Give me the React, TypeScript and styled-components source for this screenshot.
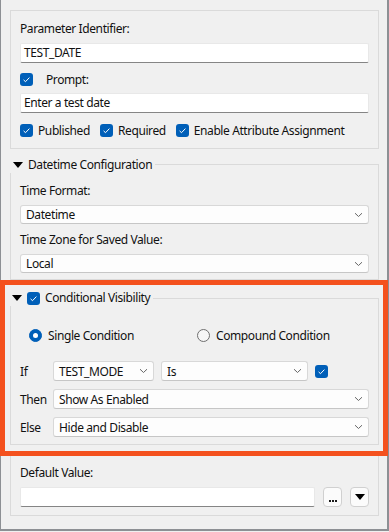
import styled, { createGlobalStyle } from 'styled-components';

const GlobalStyle = createGlobalStyle`
  body {
    margin: 0;
    background: #f0f0f0;
    font-family: "Noto Sans", "Liberation Sans", sans-serif;
    font-size: 12px;
    letter-spacing: -0.4px;
    color: #111;
  }
`;

const Page = styled.div`
  position: relative;
  width: 389px;
  height: 532px;
  overflow: hidden;
`;

const Window = styled.div`
  box-sizing: border-box;
  width: 389px;
  height: 531px;
  background: #f0f0f0;
  border-left: 1px solid #8d9094;
  border-right: 2px solid #8d9094;
  border-bottom: 2px solid #8d9094;
  padding: 10px 8px 0 9px;
  display: flex;
  flex-direction: column;
`;

// orange annotation frame drawn over the dialog
const Highlight = styled.div`
  position: absolute;
  left: 0;
  top: 280px;
  width: 388px;
  height: 176px;
  box-sizing: border-box;
  border: 5px solid #f4511e;
  pointer-events: none;
`;

const Panel = styled.div<{ $top?: number; $pt?: number; $pb?: number }>`
  margin-top: ${(p) => p.$top ?? 0}px;
  border: 1px solid #dadada;
  padding: ${(p) => p.$pt ?? 10}px 9px ${(p) => p.$pb ?? 8}px;
  display: flex;
  flex-direction: column;
`;

const Label = styled.div<{ $top?: number }>`
  margin-top: ${(p) => p.$top ?? 0}px;
  height: 16px;
  line-height: 16px;
  white-space: nowrap;
`;

const TextInput = styled.div<{ $top?: number; $width?: number }>`
  margin-top: ${(p) => p.$top ?? 0}px;
  box-sizing: border-box;
  height: 20px;
  ${(p) => (p.$width ? `width: ${p.$width}px;` : '')}
  background: #fff;
  border: 1px solid #e8e8e8;
  border-bottom-color: #858585;
  border-radius: 2px;
  padding: 0 3px;
  line-height: 18px;
  white-space: nowrap;
`;

const Row = styled.div<{ $top?: number; $gap?: number; $pl?: number }>`
  margin-top: ${(p) => p.$top ?? 0}px;
  padding-left: ${(p) => p.$pl ?? 0}px;
  height: 20px;
  display: flex;
  align-items: center;
  gap: ${(p) => p.$gap ?? 0}px;
  white-space: nowrap;
`;

const CheckItem = styled.div<{ $gap?: number }>`
  display: flex;
  align-items: center;
  gap: ${(p) => p.$gap ?? 5}px;
`;

const Box = styled.span`
  flex: none;
  width: 13px;
  height: 13px;
  border-radius: 3px;
  background: #005fb8;
  display: inline-flex;
  align-items: center;
  justify-content: center;
`;

const Radio = styled.span<{ $on?: boolean }>`
  flex: none;
  box-sizing: border-box;
  width: 13px;
  height: 13px;
  border-radius: 50%;
  background: ${(p) => (p.$on ? '#005fb8' : '#f6f6f6')};
  border: 1px solid ${(p) => (p.$on ? '#005fb8' : '#6f6f6f')};
  display: inline-flex;
  align-items: center;
  justify-content: center;
  &::after {
    content: '';
    display: ${(p) => (p.$on ? 'block' : 'none')};
    width: 5px;
    height: 5px;
    border-radius: 50%;
    background: #fff;
  }
`;

const Combo = styled.div<{ $top?: number; $width?: number }>`
  margin-top: ${(p) => p.$top ?? 0}px;
  box-sizing: border-box;
  height: 20px;
  ${(p) => (p.$width ? `width: ${p.$width}px; flex: none;` : 'flex: 1;')}
  background: #fdfdfd;
  border: 1px solid #d8d8d8;
  border-bottom-color: #c6c6c6;
  border-radius: 3px;
  padding: 0 5px;
  display: flex;
  align-items: center;
  justify-content: space-between;
  white-space: nowrap;
`;

const GroupHeader = styled.div<{ $top?: number }>`
  margin-top: ${(p) => p.$top ?? 0}px;
  height: 16px;
  display: flex;
  align-items: center;
  line-height: 16px;
  white-space: nowrap;
`;

const Caret = styled.span<{ $ml?: number }>`
  flex: none;
  margin-left: ${(p) => p.$ml ?? 3}px;
  width: 0;
  height: 0;
  border-left: 5px solid transparent;
  border-right: 5px solid transparent;
  border-top: 6px solid #000;
`;

const HeaderText = styled.span<{ $ml?: number }>`
  margin-left: ${(p) => p.$ml ?? 5}px;
`;

const HeaderLine = styled.span<{ $lineTop?: number }>`
  flex: 1;
  align-self: stretch;
  margin-left: 3px;
  margin-top: ${(p) => p.$lineTop ?? 7}px;
  border-top: 1px solid #dadada;
  border-right: 1px solid #dadada;
`;

const GroupBody = styled.div<{ $pt?: number; $pb?: number }>`
  border: 1px solid #dadada;
  border-top: none;
  padding: ${(p) => p.$pt ?? 10}px 9px ${(p) => p.$pb ?? 6}px;
  display: flex;
  flex-direction: column;
`;

const RowLabel = styled.span`
  flex: none;
  width: 33px;
`;

const RadioItem = styled.div<{ $width?: number }>`
  flex: none;
  width: ${(p) => (p.$width ? `${p.$width}px` : 'auto')};
  display: flex;
  align-items: center;
  gap: 6px;
`;

const SmallButton = styled.div`
  flex: none;
  box-sizing: border-box;
  width: 19px;
  height: 20px;
  background: #fbfbfb;
  border: 1px solid #d0d0d0;
  border-radius: 4px;
  display: flex;
  align-items: center;
  justify-content: center;
`;

const Dots = styled.span`
  display: flex;
  gap: 1px;
  margin-top: 8px;
  & > i {
    width: 2px;
    height: 2px;
    background: #1a1a1a;
  }
`;

function Check() {
  return (
    <Box>
      <svg width="13" height="13" viewBox="0 0 13 13">
        <path d="M3.6 6.9 L5.5 8.7 L9.4 4.6" fill="none" stroke="#fff" strokeWidth="1" />
      </svg>
    </Box>
  );
}

function Chevron() {
  return (
    <svg width="9" height="6" viewBox="0 0 9 6">
      <path d="M1 1.2 L4.5 4.5 L8 1.2" fill="none" stroke="#666" strokeWidth="1" />
    </svg>
  );
}

function Select({ value, top, width }: { value: string; top?: number; width?: number }) {
  return (
    <Combo $top={top} $width={width}>
      <span>{value}</span>
      <Chevron />
    </Combo>
  );
}

export default function App() {
  return (
    <>
      <GlobalStyle />
      <Page>
        <Window>
          <Panel $pt={10} $pb={8}>
            <Label>Parameter Identifier:</Label>
            <TextInput $top={6}>TEST_DATE</TextInput>
            <Row $top={6}>
              <CheckItem $gap={13}>
                <Check />
                <span>Prompt:</span>
              </CheckItem>
            </Row>
            <TextInput $top={4}>Enter a test date</TextInput>
            <Row $top={7} $gap={10}>
              <CheckItem>
                <Check />
                <span>Published</span>
              </CheckItem>
              <CheckItem>
                <Check />
                <span>Required</span>
              </CheckItem>
              <CheckItem>
                <Check />
                <span>Enable Attribute Assignment</span>
              </CheckItem>
            </Row>
          </Panel>

          <GroupHeader $top={8}>
            <Caret />
            <HeaderText>Datetime Configuration</HeaderText>
            <HeaderLine $lineTop={7} />
          </GroupHeader>
          <GroupBody $pt={10} $pb={6}>
            <Label>Time Format:</Label>
            <Select top={6} value="Datetime" />
            <Label $top={8}>Time Zone for Saved Value:</Label>
            <Select top={6} value="Local" />
          </GroupBody>

          <GroupHeader $top={10}>
            <Caret $ml={2} />
            <CheckItem $gap={5} style={{ marginLeft: 5 }}>
              <Check />
              <span>Conditional Visibility</span>
            </CheckItem>
            <HeaderLine $lineTop={8} />
          </GroupHeader>
          <GroupBody $pt={21} $pb={7}>
            <Row $pl={9} style={{ height: 16 }}>
              <RadioItem $width={168}>
                <Radio $on />
                <span>Single Condition</span>
              </RadioItem>
              <RadioItem>
                <Radio />
                <span>Compound Condition</span>
              </RadioItem>
            </Row>
            <Row $top={18}>
              <RowLabel>If</RowLabel>
              <Select width={101} value="TEST_MODE" />
              <span style={{ width: 7 }} />
              <Select width={147} value="Is" />
              <span style={{ marginLeft: 7, display: 'flex' }}>
                <Check />
              </span>
            </Row>
            <Row $top={8}>
              <RowLabel>Then</RowLabel>
              <Select value="Show As Enabled" />
            </Row>
            <Row $top={8}>
              <RowLabel>Else</RowLabel>
              <Select value="Hide and Disable" />
            </Row>
          </GroupBody>

          <Panel $top={9} $pt={10} $pb={8}>
            <Label>Default Value:</Label>
            <Row $top={6} $gap={8}>
              <TextInput $width={297} />
              <SmallButton>
                <Dots>
                  <i />
                  <i />
                  <i />
                </Dots>
              </SmallButton>
              <SmallButton>
                <Caret $ml={0} />
              </SmallButton>
            </Row>
          </Panel>
        </Window>
        <Highlight />
      </Page>
    </>
  );
}
